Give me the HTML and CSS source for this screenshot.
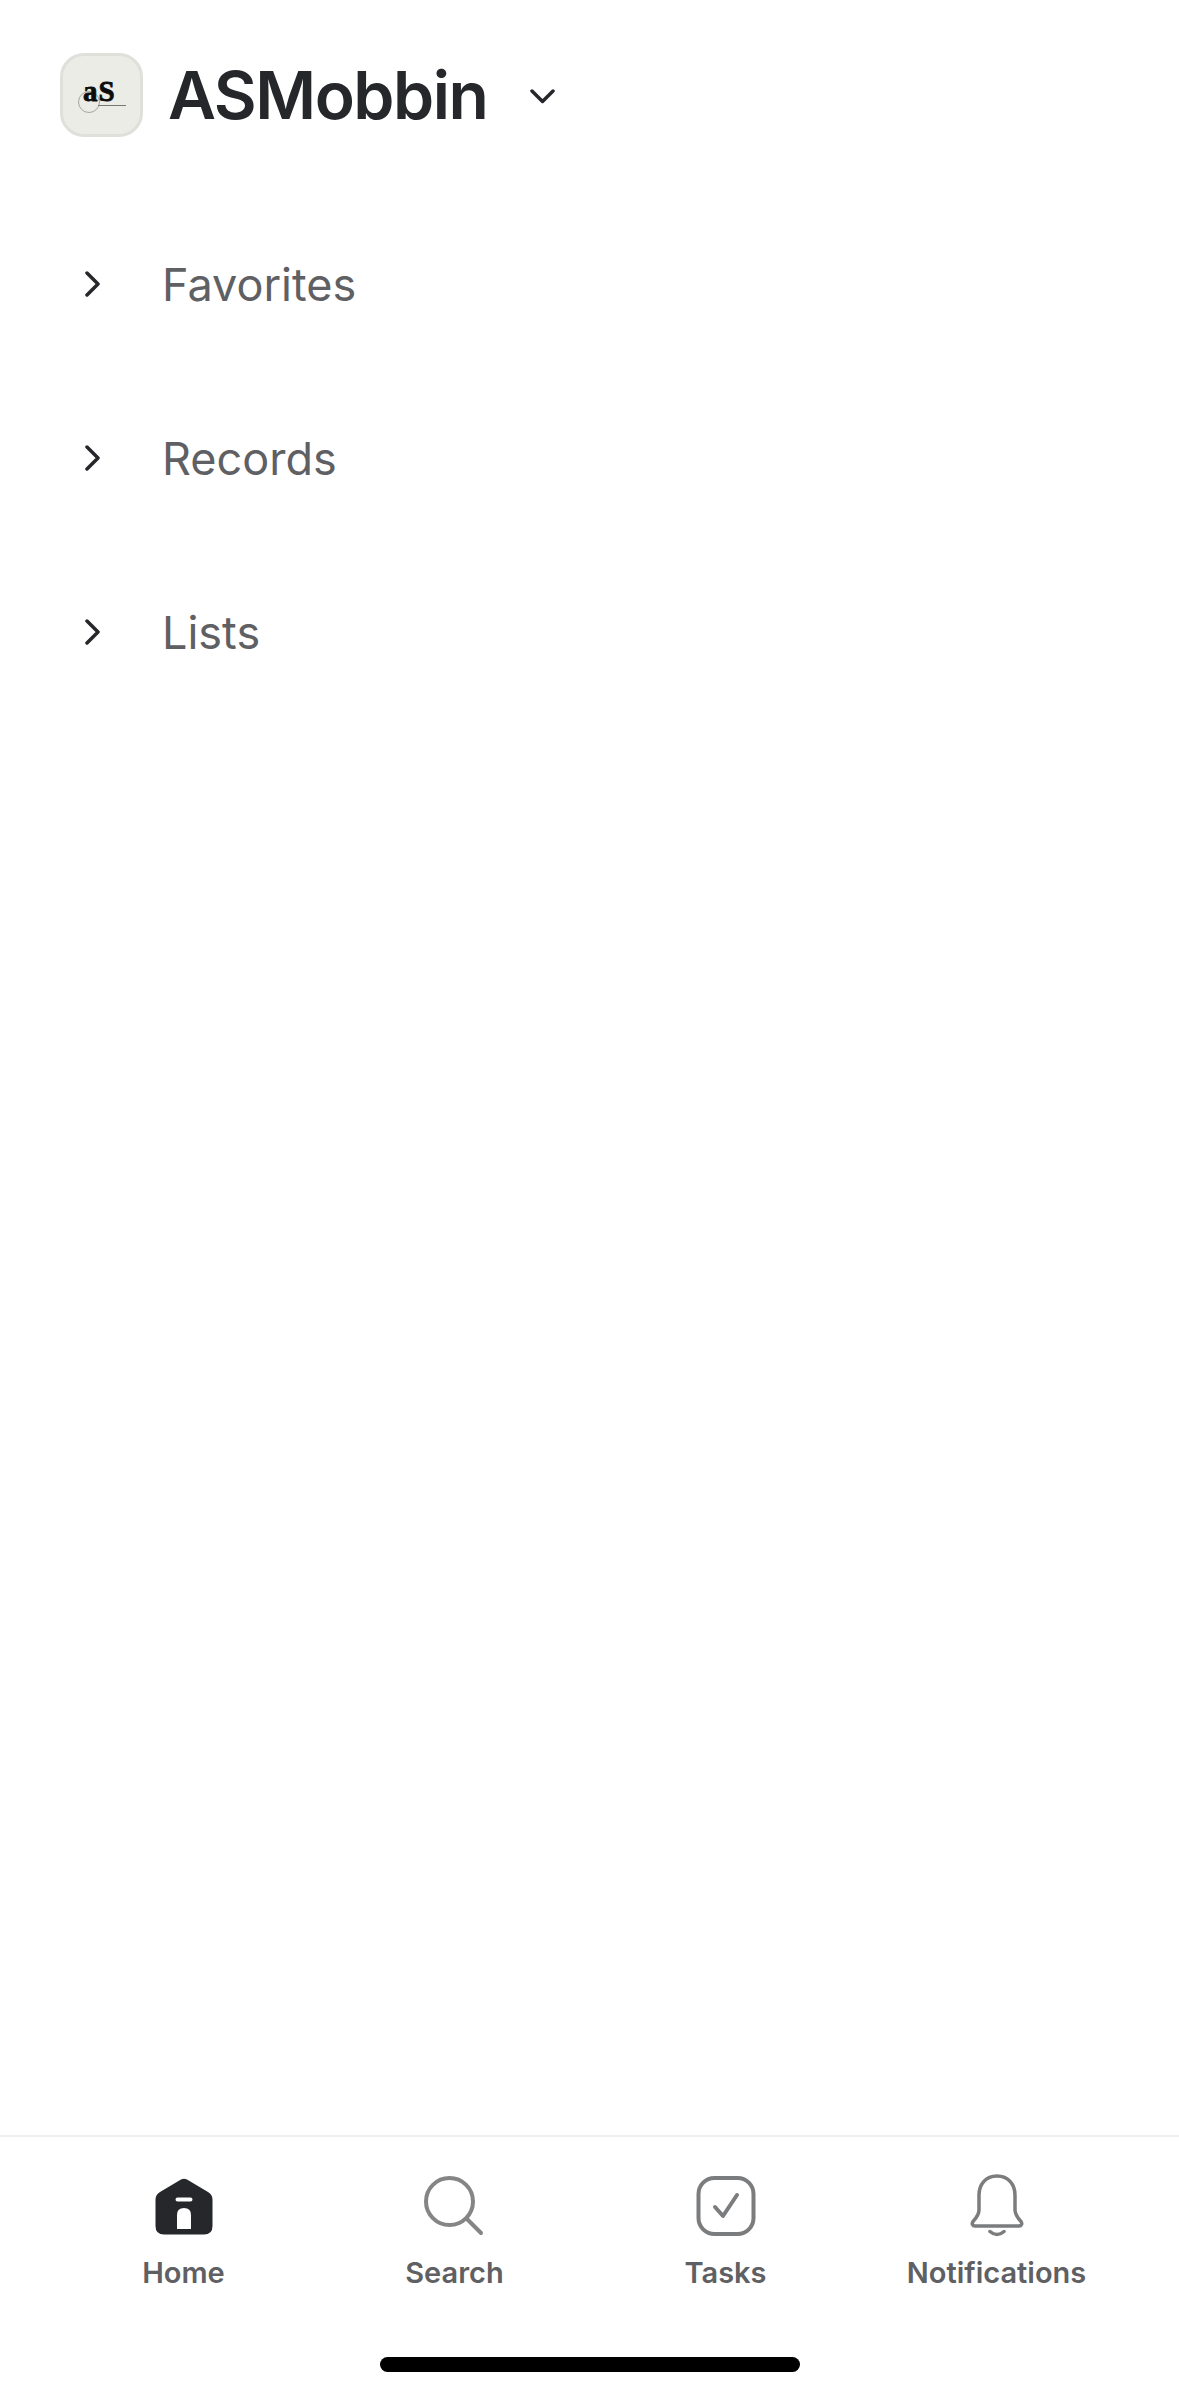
FILE: index.html
```html
<!DOCTYPE html>
<html lang="en">
<head>
    <meta charset="UTF-8">
    <meta name="viewport" content="width=device-width, initial-scale=1.0">
    <title>ASMobbin</title>
    <link rel="stylesheet" href="styles.css">
</head>
<body>
    <div class="app">
        <header class="header">
            <div class="logo">
                <svg class="logo-ring" viewBox="0 0 24 24" width="24" height="24">
                    <circle cx="12" cy="12" r="10.500" fill="none" stroke="#a5a6a0" stroke-width="1"/>
                </svg>
                <span class="logo-mark">aS</span>
                <span class="logo-line"></span>
            </div>
            <h1 class="title">ASMobbin</h1>
            <svg class="title-chevron" viewBox="0 0 25 15" width="25" height="15">
                <path d="M2 2l10.500 10.500L23 2" fill="none" stroke="#25272a" stroke-width="3.500" stroke-linecap="round" stroke-linejoin="round"/>
            </svg>
        </header>

        <main class="sections">
            <div class="section-row">
                <svg class="row-chevron" viewBox="0 0 16 26" width="16" height="26"><path d="M2 2l11 11L2 24" fill="none" stroke="#25272a" stroke-width="3.500" stroke-linecap="round" stroke-linejoin="round"/></svg>
                <span>Favorites</span>
            </div>
            <div class="section-row">
                <svg class="row-chevron" viewBox="0 0 16 26" width="16" height="26"><path d="M2 2l11 11L2 24" fill="none" stroke="#25272a" stroke-width="3.500" stroke-linecap="round" stroke-linejoin="round"/></svg>
                <span>Records</span>
            </div>
            <div class="section-row">
                <svg class="row-chevron" viewBox="0 0 16 26" width="16" height="26"><path d="M2 2l11 11L2 24" fill="none" stroke="#25272a" stroke-width="3.500" stroke-linecap="round" stroke-linejoin="round"/></svg>
                <span>Lists</span>
            </div>
        </main>

        <nav class="tabbar">
            <div class="tab">
                <svg class="tab-icon" viewBox="0 0 64 64" width="64" height="64">
                    <path fill-rule="evenodd" fill="#25272a" d="M29 5.500q3-1.500 6 0L56 18q4.500 2.800 4.500 7.500V52q0 8.500-8.500 8.500H12q-8.500 0-8.500-8.500V25.500q0-4.700 4.500-7.500zM25.500 23.500a1.500 1.500 0 0 0 0 4h13a1.500 1.500 0 0 0 0-4zM25 55h14V41q0-7-7-7t-7 7z"/>
                </svg>
                <span class="tab-label">Home</span>
            </div>
            <div class="tab">
                <svg class="tab-icon" viewBox="0 0 64 64" width="64" height="64">
                    <circle cx="26.500" cy="27.500" r="23.500" fill="none" stroke="#858585" stroke-width="4"/>
                    <path d="M44 45l14 14" fill="none" stroke="#858585" stroke-width="4" stroke-linecap="round"/>
                </svg>
                <span class="tab-label">Search</span>
            </div>
            <div class="tab">
                <svg class="tab-icon" viewBox="0 0 64 64" width="64" height="64">
                    <rect x="4.500" y="4" width="55" height="56" rx="16" fill="none" stroke="#7b7c7e" stroke-width="4"/>
                    <path d="M21 33l8 9 14-21" fill="none" stroke="#7b7c7e" stroke-width="4" stroke-linecap="round" stroke-linejoin="round"/>
                </svg>
                <span class="tab-label">Tasks</span>
            </div>
            <div class="tab">
                <svg class="tab-icon" viewBox="0 0 64 64" width="64" height="64">
                    <path d="M32 2C20.500 2 14 10.500 14 21v15c0 5-3 8-6 11.500-1.500 2-.5 4.500 2 4.500h44c2.500 0 3.500-2.500 2-4.500-3-3.500-6-6.500-6-11.500V21C50 10.500 43.500 2 32 2z" fill="none" stroke="#7b7c7e" stroke-width="3.500" stroke-linejoin="round"/>
                    <path d="M25 57.500q7 6 14 0" fill="none" stroke="#7b7c7e" stroke-width="3.500" stroke-linecap="round"/>
                </svg>
                <span class="tab-label">Notifications</span>
            </div>
        </nav>

        <div class="home-strip">
            <div class="home-indicator"></div>
        </div>
    </div>
</body>
</html>
```

FILE: styles.css
```css
body {
    margin: 0;
    background-color: #fff;
    font-family: Inter, "Liberation Sans", sans-serif;
}
.app {
    display: flex;
    flex-direction: column;
    height: 2396px;
    overflow: hidden;
}
.header {
    display: flex;
    align-items: center;
    padding: 53px 0 0 60px;
    height: 84px;
}
.logo {
    position: relative;
    box-sizing: border-box;
    width: 83px;
    height: 84px;
    flex-shrink: 0;
    border: 3px solid #dfe0da;
    border-radius: 24px;
    background-color: #ebece6;
}
.logo-ring {
    position: absolute;
    left: 14px;
    top: 34px;
}
.logo-mark {
    position: absolute;
    left: 20px;
    top: 21px;
    font-family: "Liberation Serif", serif;
    font-size: 29px;
    font-weight: bold;
    line-height: 29px;
    letter-spacing: 1px;
    color: #0c0c0c;
    -webkit-text-stroke: 0.8px #0c0c0c;
}
.logo-line {
    position: absolute;
    left: 35px;
    top: 49px;
    width: 28px;
    height: 1px;
    background-color: #77786f;
}
.title {
    margin: 0 0 0 25px;
    font-size: 66px;
    font-weight: 600;
    letter-spacing: -1.500px;
    color: #25272a;
}
.title-chevron {
    margin: 3px 0 0 43px;
}
.sections {
    flex: 1;
    padding-top: 60px;
}
.section-row {
    display: flex;
    align-items: center;
    height: 174px;
    padding-left: 85px;
    font-size: 45px;
    color: #5f6063;
}
.row-chevron {
    margin-right: 61px;
}
.tabbar {
    display: grid;
    grid-template-columns: repeat(4, 271px);
    padding: 37px 47px 0 48px;
    height: 119px;
    border-top: 2px solid #f0f0f0;
}
.tab {
    display: flex;
    flex-direction: column;
    align-items: center;
}
.tab-icon {
    margin-bottom: 17px;
}
.tab-label {
    font-size: 29px;
    font-weight: 600;
    line-height: 36px;
    color: #5f6063;
    white-space: nowrap;
}
.home-strip {
    display: flex;
    justify-content: center;
    height: 103px;
}
.home-indicator {
    width: 420px;
    height: 15px;
    margin-top: 64px;
    border-radius: 8px;
    background-color: #000;
}
```
